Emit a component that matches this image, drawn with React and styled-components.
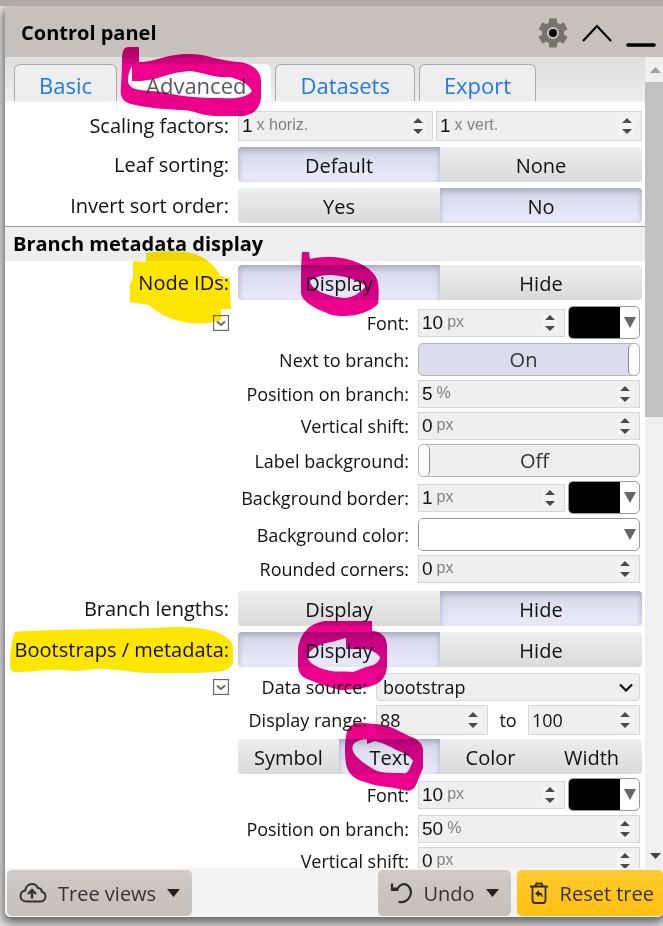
import React, { useState, useId } from "react";
import styled, { createGlobalStyle, css } from "styled-components";

const GlobalStyle = createGlobalStyle`
  *, *::before, *::after { box-sizing: border-box; }
  body {
    margin: 0;
    background: #fff;
    color: #111;
    font-family: "Open Sans", "Noto Sans", sans-serif;
    font-size: 20px;
  }
  button, input, select { font: inherit; color: inherit; margin: 0; }
`;

/* ---------- page and panel ---------- */

const Page = styled.div`
  position: relative;
  height: 100vh;
  min-width: 600px;
  display: flex;
  flex-direction: column;
  padding: 0 0 9px 5px;
  border-top: 6px solid #b2aba5;
  background: #e2e2e2;
  overflow: hidden;
`;

const Panel = styled.section`
  flex: 1;
  min-height: 0;
  display: flex;
  flex-direction: column;
  background: #fff;
  border-radius: 6px 0 6px 6px;
  box-shadow: 0 4px 10px 2px rgba(0, 0, 0, 0.55);
`;

const Header = styled.header`
  display: flex;
  align-items: center;
  gap: 14px;
  height: 51px;
  flex: none;
  padding: 2px 7px 0 16px;
  background: #c6c1bd;
  border-radius: 6px 0 0 0;
`;

const Title = styled.h1`
  flex: 1;
  margin: 0;
  font-size: 20px;
  line-height: 28px;
  font-weight: 700;
  color: #000;
`;

const IconButton = styled.button`
  display: flex;
  padding: 0;
  border: 0;
  background: none;
`;

const Body = styled.div`
  flex: 1;
  min-height: 0;
  display: flex;
`;

const Content = styled.div`
  flex: 1;
  min-width: 0;
  overflow: hidden;
`;

/* ---------- tabs ---------- */

const TabBar = styled.nav`
  display: flex;
  align-items: flex-end;
  gap: 4px;
  height: 45px;
  padding: 0 9px;
  background: linear-gradient(#dddddd, #eeeeee);
  border-bottom: 1px solid #f6f6f6;
`;

const Tab = styled.button`
  height: 37px;
  padding: 4px 24px 0;
  border: 1px solid #aaa;
  border-bottom: 0;
  border-radius: 6px 6px 0 0;
  background: #eee;
  color: #1f78f0;
  font-size: 22px;
  line-height: 32px;
  ${(p) =>
    p.$active &&
    css`
      border-color: #fff;
      background: #fff;
      color: #555b60;
    `}
`;

/* ---------- rows ---------- */

const Rows = styled.div`
  display: flex;
  flex-direction: column;
  gap: 6px;
  padding: ${(p) => (p.$first ? "9px 0 3px" : "4px 0 0")};
`;

const Row = styled.div`
  display: grid;
  grid-template-columns: 224px minmax(0, 1fr);
  column-gap: 9px;
  align-items: center;
  padding-right: 3px;
`;

const RowLabel = styled.label`
  text-align: right;
  line-height: 28px;
  white-space: nowrap;
`;

const SubRows = styled.div`
  display: flex;
  flex-direction: column;
  gap: 4px;
  padding-bottom: ${(p) => (p.$last ? 0 : 2)}px;
`;

const SubRow = styled.div`
  display: grid;
  grid-template-columns: 224px ${(p) => (p.$wide ? 129 : 171)}px minmax(0, 1fr);
  column-gap: 9px;
  align-items: center;
  padding-right: 5px;
`;

const SubLabel = styled.label`
  grid-column: 2;
  justify-self: end;
  font-size: 18px;
  line-height: 26px;
  white-space: nowrap;
`;

const FoldButton = styled.button`
  grid-column: 1;
  grid-row: 1;
  justify-self: end;
  display: flex;
  padding: 0;
  border: 0;
  background: none;
`;

const Field = styled.div`
  display: flex;
  align-items: center;
  gap: 3px;
`;

const RangeWord = styled.span`
  flex: 1;
  text-align: center;
  font-size: 18px;
`;

const SectionTitle = styled.h2`
  margin: 0;
  height: 35px;
  padding: 0 8px;
  border-top: 1px solid #999;
  background: #eee;
  color: #000;
  font-size: 20px;
  line-height: 34px;
  font-weight: 700;
`;

/* ---------- controls ---------- */

const SegmentGroup = styled.div`
  display: grid;
  grid-auto-flow: column;
  grid-auto-columns: 1fr;
  height: 35px;
  border-radius: 4px;
  overflow: hidden;
`;

const Segment = styled.button`
  padding: 2px 0 0;
  border: 0;
  background: linear-gradient(#eeeeee, #dadada);
  line-height: 32px;
  ${(p) =>
    p.$active &&
    css`
      background: linear-gradient(#d6d6e8, #ebebfc);
      box-shadow: inset 0 3px 6px rgba(90, 90, 130, 0.4);
    `}
`;

const SpinBox = styled.div`
  flex: ${(p) => (p.$width ? `0 0 ${p.$width}px` : "1 1 0")};
  min-width: 0;
  display: flex;
  align-items: center;
  gap: 4px;
  height: ${(p) => (p.$tall ? 30 : 28)}px;
  padding: 0 6px 0 3px;
  border: 1px solid #d6d6d6;
  background: #efefef;
`;

const SpinInput = styled.input`
  width: ${(p) => p.$digits}ch;
  padding: 0;
  border: 0;
  outline: 0;
  background: none;
  font-family: ${(p) => (p.$plain ? "inherit" : '"Liberation Sans", sans-serif')};
  font-size: ${(p) => (p.$plain ? 18 : 19)}px;
  line-height: 26px;
  appearance: textfield;
  &::-webkit-inner-spin-button { appearance: none; margin: 0; }
`;

const Unit = styled.span`
  flex: 1;
  color: #808080;
  font-family: "Liberation Sans", sans-serif;
  font-size: 16px;
  line-height: 22px;
  padding-bottom: 2px;
  white-space: nowrap;
`;

const SwitchLabel = styled.label`
  flex: 1;
  display: flex;
  flex-direction: ${(p) => (p.$on ? "row" : "row-reverse")};
  height: 33px;
  border: 1px solid #b4b4b4;
  border-radius: 5px;
  overflow: hidden;
  background: ${(p) => (p.$on ? "#dcdcec" : "#eee")};
`;

const SwitchText = styled.span`
  flex: 1;
  text-align: center;
  color: #333;
  line-height: 31px;
`;

const SwitchInput = styled.input`
  appearance: none;
  width: 11px;
  height: 31px;
  margin: 0;
  border: solid #888;
  border-width: ${(p) => (p.checked ? "0 0 0 1px" : "0 1px 0 0")};
  border-radius: 5px;
  background: #fff;
`;

const ColorButton = styled.button`
  flex: ${(p) => (p.$wide ? "1" : "0 0 72px")};
  display: flex;
  height: 33px;
  padding: 0;
  border: 1px solid #999;
  border-radius: 5px;
  overflow: hidden;
  background: #fff;
`;

const Swatch = styled.span`
  flex: 1;
  align-self: stretch;
  background: ${(p) => p.$color};
`;

const SwatchArrow = styled.span`
  width: 19px;
  align-self: center;
  display: flex;
  justify-content: center;
`;

const SelectBox = styled.div`
  flex: 1;
  display: grid;
  align-items: center;
  height: 28px;
  border: 1px solid #d8d8d8;
  border-radius: 4px;
  background: #efefef;
  > * { grid-area: 1 / 1; }
  > svg { justify-self: end; margin-right: 6px; pointer-events: none; }
`;

const Select = styled.select`
  width: 100%;
  height: 26px;
  padding: 0 6px;
  border: 0;
  background: none;
  appearance: none;
  font-size: 18px;
`;

/* ---------- scrollbar ---------- */

const Scrollbar = styled.div`
  flex: 0 0 18px;
  display: flex;
  flex-direction: column;
  background: #f0f0f0;
`;

const ScrollButton = styled.button`
  flex: 0 0 25px;
  display: flex;
  align-items: center;
  justify-content: center;
  padding: 0 0 0 2px;
  border: 0;
  background: none;
`;

const ScrollTrack = styled.div`
  flex: 1;
`;

const ScrollThumb = styled.div`
  height: 44%;
  background: #c1c1c1;
`;

/* ---------- footer ---------- */

const Footer = styled.footer`
  flex: none;
  display: flex;
  gap: 6px;
  padding: 2px 0 1px 2px;
  background: #f4f4f4;
  border-radius: 0 0 6px 6px;
`;

const ActionButton = styled.button`
  display: flex;
  align-items: center;
  gap: 11px;
  height: 46px;
  padding: 0 12px;
  border: 0;
  border-radius: 5px;
  background: linear-gradient(#d0cac6, #c4bfbb);
  color: #333;
  white-space: nowrap;
  ${(p) => p.$push && css`margin-left: auto;`}
  ${(p) =>
    p.$accent &&
    css`
      padding: 0 9px 0 12px;
      background: linear-gradient(#ffcb2e, #ffc010);
    `}
`;

/* Highlighter strokes lie over the whole panel and let its text show through. */
const MarkerLayer = styled.svg`
  position: absolute;
  left: 0;
  top: -6px;
  pointer-events: none;
  mix-blend-mode: multiply;
`;

/* ---------- drawings ---------- */

const Triangle = ({ w, h, color, up }) => (
  <svg width={w} height={h} viewBox="0 0 10 10" preserveAspectRatio="none" aria-hidden="true">
    <path d={up ? "M0 10L5 0L10 10Z" : "M0 0L10 0L5 10Z"} fill={color} />
  </svg>
);

const SpinArrows = () => (
  <svg width="16" height="18" viewBox="0 0 16 18" aria-hidden="true">
    <rect width="16" height="18" fill="#f3f3f3" />
    <path d="M3 6L8 1L13 6ZM3 12L8 17L13 12Z" fill="#4a4a4a" />
  </svg>
);

const teeth = [0, 60, 120, 180, 240, 300];

const Gear = () => (
  <svg width="30" height="30" viewBox="-15 -15 30 30" aria-hidden="true">
    <circle r="11" fill="#77736f" />
    {teeth.map((a) => (
      <rect key={a} x="-4" y="-14.5" width="8" height="8" rx="1" fill="#77736f" transform={`rotate(${a})`} />
    ))}
    <circle r="6" fill="#c6c1bd" />
    <circle r="4" fill="#000" />
  </svg>
);

const CloudUp = () => (
  <svg width="28" height="22" viewBox="0 0 28 22" fill="none" stroke="#333" strokeWidth="2" aria-hidden="true">
    <path d="M8 19.500H21C24 19.500 26.500 17.500 26.500 14.500C26.500 12 25 10.300 22.800 9.800C22.800 7.500 21 5.800 18.800 6C17.800 3.500 15.500 2 13 2C9.300 2 6.500 4.800 6.300 8.400C3.500 9 1.500 11.200 1.500 14C1.500 17.200 4.300 19.500 8 19.500Z" />
    <path d="M13 16.500V8.500M9 12L13 8L17 12" strokeWidth="2.400" />
  </svg>
);

const UndoIcon = () => (
  <svg width="22" height="22" viewBox="0 0 22 22" fill="none" stroke="#2a2a2a" strokeWidth="2.200" aria-hidden="true">
    <path d="M2 6.500H7.500C10 2.500 14 1 17 3C20.500 5.500 21.500 9 20.500 13C19 18 14 21 8.500 19.800" />
    <path d="M2 1.500V8H8.500" />
  </svg>
);

const TrashIcon = () => (
  <svg width="20" height="22" viewBox="0 0 20 22" fill="none" stroke="#332a10" strokeWidth="1.800" aria-hidden="true">
    <path d="M1 4.500H19M6 4.500L7.500 1.500H12.500L14 4.500M3.500 4.500V18C3.500 20 4.500 21 6 21H14C15.500 21 16.500 20 16.500 18V4.500" />
    <path d="M6 11.500L10 8V10.300C12.800 10.500 14 12.500 13.500 16C12.800 13.800 12 13 10 12.900V15Z" fill="#332a10" stroke="none" />
  </svg>
);

const FoldIcon = () => (
  <svg width="16" height="16" viewBox="0 0 16 16" fill="none" stroke="#666" aria-hidden="true">
    <rect x="0.500" y="0.500" width="15" height="15" strokeWidth="1.300" />
    <path d="M4 6.500L8 10L12 6.500" strokeWidth="1.800" />
  </svg>
);

const pinkMarks = [
  "M122 62C122 52 123 47 129 47H139V62C156 62 165 54 190 54C206 54 220 61 238 62C252 63 261 71 261 81V98C260 110 251 116 240 116H215C198 115 195 110 180 110C158 109 143 107 131 104C121 101 120 95 121 87ZM132 66V81L141 81C158 80 170 72 190 71C206 73 215 78 228 77C238 78 249 84 252 91C247 98 233 99 220 98C200 98 180 96 165 93C152 89 128 94 128 80C128 74 130 69 132 66Z",
  "M302 252H309L310 259C318 257 325 257 332 257C352 258 371 266 377 279C379 285 379 296 378 304C370 312 357 316 344 316C334 316 330 315 327 313C314 308 301 301 301 292C301 279 301 264 302 252ZM310 281C316 276 323 275 331 275C345 276 358 280 366 286C360 293 353 298 344 298C334 297 322 294 316 289C312 286 310 284 310 281Z",
  "M325 621H372V631C381 631 387 637 387 646V667C386 680 377 685 368 687C357 689 349 690 341 690C329 688 315 682 307 679C300 676 298 671 298 664V650C299 635 309 623 325 621ZM308 658C306 651 320 643 332 642C338 640 342 639 346 638V649H365C373 650 380 655 380 658C378 664 372 666 366 667L353 672C344 671 337 672 331 671C320 669 309 664 308 658Z",
  "M347 731C350 725 355 722 362 723C376 724 385 724 393 728L409 736C418 739 423 744 423 750V768L416 785C414 790 408 792 403 790C390 786 376 787 365 782C353 779 348 773 346 764C344 752 345 740 347 731ZM353 751C350 744 358 739 367 739V744L375 741C384 743 392 748 401 752C407 754 411 758 413 761L409 770C407 773 405 774 402 773C390 773 381 773 375 770C366 765 355 757 353 751Z",
];

const yellowMarks = [
  "M146 253C159 251 173 251 186 252C200 254 215 263 220 276L230 278V293L231 309H221V320C210 324 200 324 190 323C173 321 158 314 149 305L130 302V284L133 279V261L146 262Z",
  "M15 632C70 628 130 630 173 627C195 627 208 629 217 632C228 637 233 642 233 648V662C232 669 223 672 213 672C190 674 170 673 150 673C130 673 112 668 98 669C88 669 82 671 73 671C55 668 38 671 20 672C12 673 10 670 10 665C10 655 11 641 15 632Z",
];

const Markers = () => (
  <MarkerLayer width="663" height="926" viewBox="0 0 663 926" aria-hidden="true">
    {yellowMarks.map((d) => <path key={d} d={d} fill="#ffe600" />)}
    {pinkMarks.map((d) => <path key={d} d={d} fill="#ec008c" fillRule="evenodd" />)}
  </MarkerLayer>
);

/* ---------- composed controls ---------- */

function Spin({ id, value, unit, label, ...rest }) {
  const [v, setV] = useState(value);
  return (
    <SpinBox {...rest}>
      <SpinInput
        id={id}
        type="number"
        aria-label={label}
        value={v}
        $plain={!unit}
        $digits={String(v).length}
        onChange={(e) => setV(e.target.value)}
      />
      <Unit>{unit}</Unit>
      <SpinArrows />
    </SpinBox>
  );
}

function Segments({ options, initial, labelId }) {
  const [sel, setSel] = useState(initial);
  return (
    <SegmentGroup role="group" aria-labelledby={labelId} aria-label={labelId ? undefined : "Style"}>
      {options.map((o) => (
        <Segment key={o} type="button" $active={o === sel} aria-pressed={o === sel} onClick={() => setSel(o)}>
          {o}
        </Segment>
      ))}
    </SegmentGroup>
  );
}

function ChoiceRow({ label, options, initial }) {
  const id = useId();
  return (
    <Row>
      <RowLabel as="span" id={id}>{label}</RowLabel>
      <Segments options={options} initial={initial} labelId={id} />
    </Row>
  );
}

function Switch({ id, initial }) {
  const [on, setOn] = useState(initial);
  return (
    <SwitchLabel $on={on}>
      <SwitchText>{on ? "On" : "Off"}</SwitchText>
      <SwitchInput id={id} type="checkbox" checked={on} onChange={(e) => setOn(e.target.checked)} />
    </SwitchLabel>
  );
}

function ColorPicker({ id, color, wide, label }) {
  return (
    <ColorButton id={id} type="button" $wide={wide} aria-label={label}>
      <Swatch $color={color} />
      <SwatchArrow><Triangle w={12} h={11} color="#666" /></SwatchArrow>
    </ColorButton>
  );
}

function SubField({ label, fold, wide, children }) {
  const id = useId();
  return (
    <SubRow $wide={wide}>
      {fold && <FoldButton type="button" aria-label={`Fold ${fold}`}><FoldIcon /></FoldButton>}
      <SubLabel htmlFor={id}>{label}</SubLabel>
      <Field>{children(id)}</Field>
    </SubRow>
  );
}

const tabs = ["Basic", "Advanced", "Datasets", "Export"];

export default function App() {
  const [tab, setTab] = useState("Advanced");
  return (
    <>
      <GlobalStyle />
      <Page>
        <Panel>
          <Header>
            <Title>Control panel</Title>
            <IconButton type="button" aria-label="Settings"><Gear /></IconButton>
            <IconButton type="button" aria-label="Collapse">
              <svg width="30" height="18" viewBox="0 0 30 18" fill="none" stroke="#000" strokeWidth="2.200">
                <path d="M1 17L15 2L29 17" />
              </svg>
            </IconButton>
            <IconButton type="button" aria-label="Minimise">
              <svg width="30" height="30" viewBox="0 0 30 30" stroke="#000" strokeWidth="3.600" strokeLinecap="round">
                <path d="M2 27H28" />
              </svg>
            </IconButton>
          </Header>

          <Body>
            <Content>
              <TabBar>
                {tabs.map((t) => (
                  <Tab key={t} type="button" $active={t === tab} onClick={() => setTab(t)}>{t}</Tab>
                ))}
              </TabBar>

              <Rows $first>
                <Row>
                  <RowLabel htmlFor="scale-x">Scaling factors:</RowLabel>
                  <Field>
                    <Spin id="scale-x" value={1} unit="x horiz." $tall $width={195} />
                    <Spin value={1} unit="x vert." label="Vertical scaling" $tall />
                  </Field>
                </Row>
                <ChoiceRow label="Leaf sorting:" options={["Default", "None"]} initial="Default" />
                <ChoiceRow label="Invert sort order:" options={["Yes", "No"]} initial="No" />
              </Rows>

              <SectionTitle>Branch metadata display</SectionTitle>

              <Rows>
                <ChoiceRow label="Node IDs:" options={["Display", "Hide"]} initial="Display" />
                <SubRows>
                  <SubField label="Font:" fold="node IDs">
                    {(id) => (
                      <>
                        <Spin id={id} value={10} unit="px" />
                        <ColorPicker color="#000" label="Font color" />
                      </>
                    )}
                  </SubField>
                  <SubField label="Next to branch:">{(id) => <Switch id={id} initial />}</SubField>
                  <SubField label="Position on branch:">{(id) => <Spin id={id} value={5} unit="%" />}</SubField>
                  <SubField label="Vertical shift:">{(id) => <Spin id={id} value={0} unit="px" />}</SubField>
                  <SubField label="Label background:">{(id) => <Switch id={id} initial={false} />}</SubField>
                  <SubField label="Background border:">
                    {(id) => (
                      <>
                        <Spin id={id} value={1} unit="px" />
                        <ColorPicker color="#000" label="Border color" />
                      </>
                    )}
                  </SubField>
                  <SubField label="Background color:">{(id) => <ColorPicker id={id} color="#fff" wide />}</SubField>
                  <SubField label="Rounded corners:">{(id) => <Spin id={id} value={0} unit="px" />}</SubField>
                </SubRows>

                <ChoiceRow label="Branch lengths:" options={["Display", "Hide"]} initial="Hide" />
                <ChoiceRow label="Bootstraps / metadata:" options={["Display", "Hide"]} initial="Display" />
                <SubRows $last>
                  <SubField label="Data source:" fold="metadata" wide>
                    {(id) => (
                      <SelectBox>
                        <Select id={id} defaultValue="bootstrap">
                          <option>bootstrap</option>
                        </Select>
                        <svg width="14" height="9" viewBox="0 0 14 9" fill="none" stroke="#111" strokeWidth="2.200" aria-hidden="true">
                          <path d="M1 1.500L7 7.500L13 1.500" />
                        </svg>
                      </SelectBox>
                    )}
                  </SubField>
                  <SubField label="Display range:" wide>
                    {(id) => (
                      <>
                        <Spin id={id} value={88} $tall $width={112} />
                        <RangeWord>to</RangeWord>
                        <Spin value={100} label="Range end" $tall $width={112} />
                      </>
                    )}
                  </SubField>
                  <Row>
                    <span />
                    <Segments options={["Symbol", "Text", "Color", "Width"]} initial="Text" />
                  </Row>
                  <SubField label="Font:">
                    {(id) => (
                      <>
                        <Spin id={id} value={10} unit="px" />
                        <ColorPicker color="#000" label="Font color" />
                      </>
                    )}
                  </SubField>
                  <SubField label="Position on branch:">{(id) => <Spin id={id} value={50} unit="%" />}</SubField>
                  <SubField label="Vertical shift:">{(id) => <Spin id={id} value={0} unit="px" />}</SubField>
                </SubRows>
              </Rows>
            </Content>

            <Scrollbar>
              <ScrollButton type="button" aria-label="Scroll up"><Triangle w={11} h={6} color="#a0a0a0" up /></ScrollButton>
              <ScrollTrack><ScrollThumb /></ScrollTrack>
              <ScrollButton type="button" aria-label="Scroll down"><Triangle w={11} h={6} color="#444" /></ScrollButton>
            </Scrollbar>
          </Body>

          <Footer>
            <ActionButton type="button"><CloudUp />Tree views<Triangle w={13} h={8} color="#222" /></ActionButton>
            <ActionButton type="button" $push><UndoIcon />Undo<Triangle w={13} h={8} color="#222" /></ActionButton>
            <ActionButton type="button" $accent><TrashIcon />Reset tree</ActionButton>
          </Footer>
        </Panel>
        <Markers />
      </Page>
    </>
  );
}
